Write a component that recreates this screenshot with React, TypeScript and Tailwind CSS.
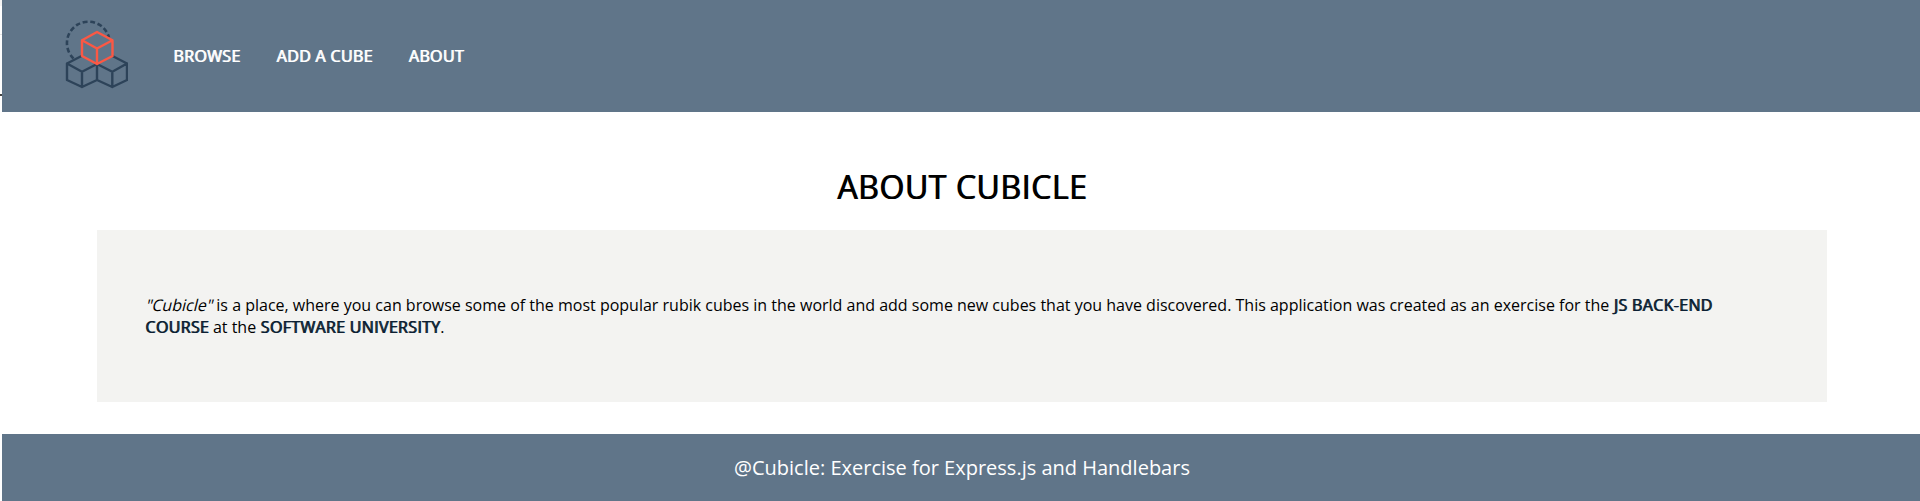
import React from "react";

function Logo() {
  return (
    <svg className="-mt-1" width="64" height="70" viewBox="64 19 64 70" fill="none" strokeWidth="2.4" strokeLinejoin="round" strokeLinecap="round">
      <g stroke="#2d4359">
        <path d="M73.500 58.500A21.400 21.400 0 1 1 109 37.500" strokeWidth="2.600" strokeDasharray="4.800 2.700" strokeLinecap="butt" />
        <path d="M81.500 56L67 63.500V80L82 87L97 80L112.300 87L127 80V63.500L112.500 56M67 63.500L82 71.700L97 64L112.300 71.700L127 63.500M82 71.700V87M97 64V80M112.300 71.700V87" />
      </g>
      <path stroke="#fb5844" d="M97 32L112.500 40.200V56L97 64L82 56V40.200ZM82 40.200L97 48.500L112.500 40.200M97 48.500V64" />
    </svg>
  );
}

function Strong({ children }: { children: React.ReactNode }) {
  return <strong className="font-normal tracking-[0.33px] text-[#0c1f33] [text-shadow:1px_0_0_#0c1f33]">{children}</strong>;
}

const links = ["BROWSE", "ADD A CUBE", "ABOUT"];

export default function App() {
  return (
    <div className="flex h-[501px] bg-white font-['Open_Sans',sans-serif] text-base leading-[22px] text-black">
      <div className="flex w-[2px] shrink-0 flex-col">
        <div className="h-1.5 bg-[#f5f5f5]" />
        <div className="mt-7 h-px bg-[#e5e5e5]" />
        <div className="mt-[59px] h-[2px] bg-[#444444]" />
      </div>
      <div className="flex min-w-0 flex-1 flex-col">
        <header className="flex h-28 items-center bg-[#607589] pl-[62px]">
          <Logo />
          <nav className="ml-[45px] flex gap-9 text-white">
            {links.map((label) => (
              <a key={label} className="tracking-[0.35px] [text-shadow:1px_0_0_#fff]">{label}</a>
            ))}
          </nav>
        </header>
        <main className="flex flex-1 flex-col px-[95px] pr-[93px]">
          <h1 className="pt-[53px] text-center text-[32px] leading-[44px] tracking-[0.56px] [text-shadow:1px_0_0_#000]">ABOUT CUBICLE</h1>
          <section className="mt-[21px] h-[172px] bg-[#f3f3f1] pr-16 pl-12 pt-16">
            <p>
              <em className="inline-block origin-[50%_75%] -skew-x-[14deg] not-italic">"Cubicle"</em> is a place, where you can browse some of the most popular rubik cubes in the world and
              add some new cubes that you have discovered. This application was created as an exercise for the{" "}
              <Strong>JS BACK-END COURSE</Strong> at the <Strong>SOFTWARE UNIVERSITY</Strong>.
            </p>
          </section>
        </main>
        <footer className="flex h-[67px] items-center justify-center bg-[#607589] pl-0.5 text-xl text-white">
          <p>@Cubicle: Exercise for Express.js and Handlebars</p>
        </footer>
      </div>
    </div>
  );
}
